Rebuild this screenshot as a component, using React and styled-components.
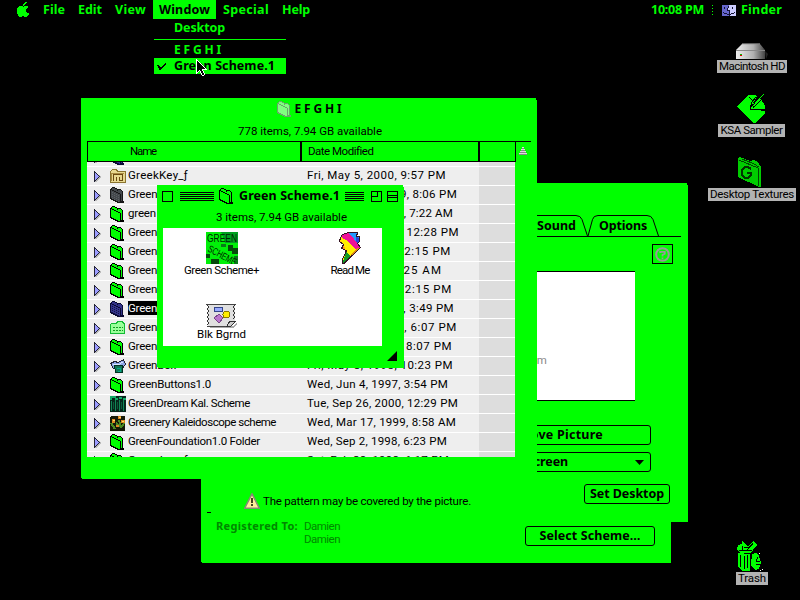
import React, { useLayoutEffect, useRef, useState } from "react";
import styled, { createGlobalStyle, css } from "styled-components";

const GREEN = "#00ff00";
const plain = css`
  font-family: Roboto, "Liberation Sans", sans-serif;
  font-size: 11.5px;
  font-weight: 400;
`;
const strong = css`
  font-family: "Noto Sans", "Open Sans", sans-serif;
  font-size: 12.5px;
  font-weight: 700;
`;

const Global = createGlobalStyle`
  * { box-sizing: border-box; }
  body { margin: 0; background: #000; overflow: hidden; }
  svg { display: block; flex: none; }
`;

/* ---------- text ---------- */

const Line = styled.span`
  display: block;
  flex: none;
  white-space: pre;
  line-height: 14px;
  color: ${(p) => p.$color || "#000"};
  ${(p) => (p.$bold ? strong : plain)}
  ${(p) => p.$size && `font-size: ${p.$size}px;`}
`;

/* A label tracked so that its run of glyphs fills the given width. */
function Label({ width, children, bold, color, size }) {
  const ref = useRef(null);
  const [tracking, setTracking] = useState(0);
  useLayoutEffect(() => {
    const range = document.createRange();
    range.selectNodeContents(ref.current);
    const natural = range.getBoundingClientRect().width;
    setTracking((t) => t + (width - natural) / children.length);
  }, [width, children]);
  return (
    <Line ref={ref} $bold={bold} $color={color} $size={size} style={{ width, letterSpacing: tracking }}>
      {children}
    </Line>
  );
}

/* ---------- drawings ---------- */

function Bitmap({ rows, colors }) {
  const width = Math.max(...rows.map((r) => r.length));
  const cells = [];
  rows.forEach((row, y) => {
    let x = 0;
    while (x < row.length) {
      let end = x + 1;
      while (end < row.length && row[end] === row[x]) end += 1;
      if (colors[row[x]]) {
        cells.push(<rect key={`${x}-${y}`} x={x} y={y} width={end - x} height="1" fill={colors[row[x]]} />);
      }
      x = end;
    }
  });
  return (
    <svg width={width} height={rows.length} shapeRendering="crispEdges">
      {cells}
    </svg>
  );
}

const APPLE = [
  "........##...",
  ".......##....",
  "......##.....",
  "......#......",
  "..####.####..",
  ".##########..",
  "##########...",
  "#########....",
  "#########....",
  "#########....",
  "##########...",
  "############.",
  ".###########.",
  ".##########..",
  "..###..###...",
];

const FINDER = [
  "aaaaaaabbbbbbb",
  "aaaaaakbbbbbbb",
  "aakaaakbbbkbbb",
  "aakaakbbbbkbbb",
  "aaaaakbbbbbbbb",
  "aaaaakkkbbbbbb",
  "aaaaaaakbbbbbb",
  "akaaaaakbbbbkb",
  "aakkkaakbkkkbb",
  "aaaaakkkkbbbbb",
  "aaaaaaakbbbbbb",
];

const ARROW = [
  "w",
  "ww",
  "wkw",
  "wkkw",
  "wkkkw",
  "wkkkkw",
  "wkkkkkw",
  "wkkkkkkw",
  "wkkkkkkkw",
  "wkkkkkkkkw",
  "wkkkkkwwwww",
  "wkkwkkw",
  "wkw.wkkw",
  "ww..wkkw",
  "w....wkkw",
  ".....wkkw",
  "......ww",
];

const CHECK = [
  "........k",
  ".......kk",
  "kk....kk.",
  ".kk..kk..",
  ".kkkkk...",
  "..kkk....",
  "..kk.....",
];

const FOLDER = [
  "..kkk..........",
  ".kgggkk........",
  "kkgggggkkkk....",
  "kgkkgggkgggk...",
  "kgggkkggggggk..",
  "kgdgggkkggggk..",
  "kgggdgggkkggk..",
  "kgdgggdgggkgk..",
  "kgggdgggdgkgk..",
  "kgdgggdgggkgk..",
  "kgggdgggdgkgk..",
  "kkdgggdgggkgk..",
  ".kkkdgggdgkgk..",
  "...kkkdgggkgk..",
  ".....kkkdgkkkk.",
  ".......kkkkkkk.",
];

function Folder({ fill = GREEN, line = "#000", dots = fill }) {
  return <Bitmap rows={FOLDER} colors={{ k: line, g: fill, d: dots }} />;
}

function RowIcon({ kind }) {
  if (kind === "key")
    return (
      <svg width="16" height="16" shapeRendering="crispEdges">
        <path d="M.5 14.500v-11l2-2h4l1 2h8v11z" fill="#e8d890" stroke="#8a7430" />
        <path d="M3.500 13V6.500h9v6h-3V9M6.500 9v4" fill="none" stroke="#6b4a10" />
        <path d="M2 5.500h12M1.500 5v8" stroke="#a88a40" />
      </svg>
    );
  if (kind === "dark") return <Folder fill="#44484c" line="#181818" dots="#5c6064" />;
  if (kind === "navy") return <Folder fill="#333388" line="#0a0a33" dots="#11114a" />;
  if (kind === "pale")
    return (
      <svg width="16" height="16" shapeRendering="crispEdges">
        <path d="M.5 13.500V4.500l1-1h5l1-2h5l1 2h1v10z" fill="#99ff99" stroke="#11bb33" />
        <path d="M3 7.500h10M3 10.500h10" stroke="#119922" strokeDasharray="2 1" />
      </svg>
    );
  if (kind === "cards")
    return (
      <svg width="16" height="16" shapeRendering="crispEdges">
        <path d="M.5 5.500l4-2 4 1 5-3 2 5-2 2v1l-10 1z" fill="#8fa8e8" stroke="#223" />
        <path d="M3 6l5 1 5-3" fill="none" stroke="#dde6ff" strokeWidth="1" />
        <path d="M4.500 7.500h8v7h-7z" fill="#117755" stroke="#032" />
        <path d="M7 10h3v3H8" fill="none" stroke="#00aa88" />
      </svg>
    );
  if (kind === "dream")
    return (
      <svg width="16" height="16" shapeRendering="crispEdges">
        <path d="M0 0h16v16H0z" fill="#06251a" />
        <path d="M0 1h6M0 3h2M5 3h3M9 2h3M13 3h3" stroke="#11aa66" strokeWidth="2" />
        <path d="M1.500 5v10M5.500 4v11M9.500 4v11M13.500 4v11" stroke="#118855" />
        <path d="M3.500 6v7M7.500 6v7M11.500 6v7" stroke="#0a5a3a" />
      </svg>
    );
  if (kind === "flowers")
    return (
      <svg width="16" height="16" shapeRendering="crispEdges">
        <path d="M1 1h14v15H0V3z" fill="#161a08" />
        <path d="M1 8l4 6M9 5l2 8M6 8l4 3M14 8l-3 5" stroke="#4c8a22" strokeWidth="2" />
        <path d="M2 4h3v4H2zM8 1h3v3H8zM11 5h4v3h-4zM6 10h3v2H6z" fill="#dd8a22" />
        <path d="M3 5h2v1H3zM9 2h2v1H9zM12 6h2v1h-2z" fill="#ffdd66" />
      </svg>
    );
  return <Folder />;
}

const DISCLOSURE = [
  "k......",
  "kk.....",
  "kpk....",
  "kppk...",
  "kpppks.",
  "kppppks",
  "kpppkss",
  "kppkss.",
  "kpkss..",
  "kkss...",
  "kss....",
];
const Disclosure = () => (
  <Bitmap rows={DISCLOSURE} colors={{ k: "#222233", p: "#9c9cff", s: "#bbbbbb" }} />
);

const DiskIcon = () => (
  <svg width="32" height="17" viewBox="0 0 32 17">
    <defs>
      <linearGradient id="disk" x1="0" x2="1">
        <stop offset="0" stopColor="#eee" />
        <stop offset="0.6" stopColor="#b0b0b0" />
        <stop offset="1" stopColor="#444" />
      </linearGradient>
    </defs>
    <path d="M29 8l3 3-2 5z" fill="#222" />
    <path d="M0 7L6 1h18l5 6v9H0z" fill="url(#disk)" />
    <path d="M0 7.500h29M6 .8h18" stroke="#888" fill="none" />
    <path d="M4 11h2v1H4z" fill="#00bb00" />
    <path d="M4 12h2v1H4z" fill="#dd0000" />
  </svg>
);

const SamplerIcon = () => (
  <svg width="29" height="30" shapeRendering="crispEdges">
    <path d="M0 12L11 1h7l2 1-6 11 14 4v2L18 29h-2z" fill={GREEN} />
    <path d="M16 9l8-4 4 7v3H18z" fill={GREEN} />
    <path d="M12 3l4 4M19 3l-4 5-2 7M13 15h8l7 2" fill="none" stroke="#000" />
    <path d="M14 13L26 0M17 13L28 2" stroke="#000" />
    <path d="M15 13L27 0" stroke={GREEN} />
  </svg>
);

const TexturesIcon = () => (
  <svg width="28" height="31" shapeRendering="crispEdges">
    <path d="M0 1l2-1 10 4 3-1 4 1 4 6v20H21L0 20z" fill="#00cc00" />
    <path d="M1 3l19 8v18M4 2l10 4 2 1 5 3" fill="none" stroke="#004400" />
    <path d="M13 12l-3-2H7l-3 3v5l3 3h3l3-3v-2H9" fill="none" stroke="#003300" strokeWidth="2" />
  </svg>
);

const TrashIcon = () => (
  <svg width="30" height="31" shapeRendering="crispEdges">
    <path d="M1 4l4-1V0l3 3 3 2 5-5 4 4-4 5-2 3H3L0 8z" fill={GREEN} />
    <path d="M5.500 5v4M7 6.500h5l4-4M10 9l5-5M2 9.500h13" fill="none" stroke="#000" />
    <path d="M1 12l12 1v17H6l-5-4z" fill={GREEN} />
    <path d="M3.500 14v12M7.500 15v13M10.500 14v13" stroke="#000" />
    <path d="M15 13l4-1 3 3 2 6-2 7-4 1-4-5z" fill={GREEN} />
    <path d="M21 16l-2 4 4 1M19 23.500h4" fill="none" stroke="#000" />
    <path d="M22 12h1v1h-1zM25 28h1v1h-1zM23 29h1v1h-1z" fill="#fff" />
  </svg>
);

const SchemeIcon = () => (
  <svg width="32" height="32" shapeRendering="crispEdges">
    <path d="M0 0h32v32H0z" fill="#00f008" />
    <path d="M15 0h17v11H19z" fill="#00a020" />
    <path d="M22 13h5v3h5v6h-6v-3h-4zM0 22h4v4H0zM5 27h8v5H5z" fill="#064a0c" />
    <path d="M28 24h4v8h-4zM15 12h5v3h-5z" fill="#087a18" />
    <g fontFamily="Liberation Sans, sans-serif" fontSize="11" fill="#002200">
      <text x="1" y="10" textLength="30" lengthAdjust="spacingAndGlyphs">GREEN</text>
      <text x="1" y="19" transform="rotate(28 1 19)" fontSize="10" textLength="31" lengthAdjust="spacingAndGlyphs">
        SCHEME
      </text>
    </g>
  </svg>
);

const BOLT = "M3.500 2.500l6-2h9l-1 4h3v5l-2 2 3 4L5.500 31h-2v-4L7.500 18.500l-5-2 2-4-4-3 1-4z";
const BoltIcon = () => (
  <svg width="23" height="32" shapeRendering="crispEdges">
    <defs>
      <clipPath id="bolt">
        <path d={BOLT} />
      </clipPath>
    </defs>
    <g clipPath="url(#bolt)">
      <path d="M0 0h23v33H0z" fill="#ffee00" />
      <path d="M8 0h15v16l-4-1z" fill="#2299ff" />
      <path d="M17 5l6 2v9l-5-2z" fill="#2244dd" />
      <path d="M0 4l9-4 13 15-4 4L9 9z" fill="#ee1199" />
      <path d="M0 8l5 4 1 5H0z" fill="#ff9922" />
      <path d="M12 23l5-6 5-2-9 10z" fill="#dd8811" />
      <path d="M7 20l5 5-9 8z" fill="#119922" />
    </g>
    <path d={BOLT} fill="none" stroke="#331122" />
  </svg>
);

const BackgroundIcon = () => (
  <svg width="32" height="24" shapeRendering="crispEdges">
    <path d="M3 22h24l4-4v3l-4 3H4z" fill="#aaa" />
    <path d="M2 1h27v16l-6 5H2z" fill="#e0e0e0" />
    <path d="M0 .5h30M1 22.500h21" stroke="#444" />
    <path d="M1 1l2 2-2 2 2 2-2 2 2 2-2 2 2 2-2 2 2 2-2 2M29 1l-2 2 2 2-2 2 2 2-2 2 2 2-2 2" fill="none" stroke="#333" />
    <path d="M8.500 3.500h8v4h-8z" fill="#99aaff" stroke="#334488" />
    <circle cx="20.500" cy="10.500" r="3.500" fill="#ffee00" stroke="#887700" />
    <path d="M13 10l4 4-4 5-5-5z" fill="#bb77cc" stroke="#774488" />
    <path d="M21 22l3-5h6l-5 5z" fill="#ccc" stroke="#333" />
  </svg>
);

const WarningIcon = () => (
  <svg width="16" height="16">
    <path d="M8 .8L15.300 15.200H.7z" fill="#ffee99" stroke="#888877" strokeWidth="1.500" />
    <path d="M7 5h2v5H7zM7 11h2v2H7z" fill="#444422" />
  </svg>
);

const HelpIcon = () => (
  <svg width="15" height="15" fill="none" stroke="#999999" strokeWidth="2">
    <circle cx="7.500" cy="7.500" r="6.300" />
    <path d="M5.200 6V4.800h4.600v2L7.500 8v1.500M7.500 10.500v1.700" strokeWidth="1.700" />
  </svg>
);

const TabEdge = ({ rising }) => (
  <svg width={rising ? 10 : 12} height="21" fill="none" stroke="#000">
    <path d={rising ? "M0 21L4.500 4.500Q5.500.5 10 .5" : "M0 .5Q4.500.5 6 4.500L11.500 21"} />
  </svg>
);

/* ---------- menu bar ---------- */

const Screen = styled.main`
  position: relative;
  width: 800px;
  height: 600px;
  overflow: hidden;
  background: #000;
`;
const MenuBar = styled.header`
  display: flex;
  align-items: center;
  height: 19px;
  padding: 0 18px 0 17px;
`;
const MenuTitle = styled.div`
  display: flex;
  align-items: center;
  height: 19px;
  padding: 1px 6px 0;
  background: ${(p) => (p.$open ? GREEN : "transparent")};
`;
const Menus = styled.nav`
  display: flex;
  flex: 1;
  gap: 1px;
  margin-left: 7px;
`;
const Status = styled.div`
  display: flex;
  align-items: center;
  gap: 5px;
  padding-top: 1px;
`;
const Dots = styled.i`
  width: 1px;
  height: 11px;
  margin: 0 4px 0 3px;
  background: repeating-linear-gradient(${GREEN} 0 1px, transparent 1px 3px);
`;
const Menu = styled.div`
  position: absolute;
  z-index: 5;
  left: 154px;
  top: 20px;
  width: 132px;
  display: flex;
  flex-direction: column;
`;
const MenuItem = styled.div`
  display: flex;
  align-items: center;
  height: 16px;
  padding-left: ${(p) => (p.$checked ? 3 : 20)}px;
  gap: 8px;
  background: ${(p) => (p.$checked ? GREEN : "transparent")};
`;
const Separator = styled.hr`
  width: 100%;
  height: 1px;
  margin: 3px 0 2px;
  border: 0;
  background: ${GREEN};
`;
const Pointer = styled.div`
  position: absolute;
  z-index: 6;
  left: 196px;
  top: 59px;
`;

/* ---------- windows ---------- */

const Window = styled.section`
  position: absolute;
  left: ${(p) => p.$x}px;
  top: ${(p) => p.$y}px;
  width: ${(p) => p.$w}px;
  height: ${(p) => p.$h}px;
  display: flex;
  flex-direction: column;
  background: ${GREEN};
  clip-path: polygon(0 0, calc(100% - 1px) 0, calc(100% - 1px) 2px, 100% 2px, 100% 100%, 1px 100%, 1px calc(100% - 1px), 0 calc(100% - 1px));
`;
const TitleRow = styled.div`
  display: flex;
  align-items: center;
  justify-content: ${(p) => (p.$center ? "center" : "flex-start")};
  flex: none;
  gap: ${(p) => p.$gap || 3}px;
  height: 22px;
  padding: ${(p) => p.$pad || "0"};
`;
const TitleGroup = styled.div`
  display: flex;
  align-items: center;
  flex: 1;
  gap: 5px;
  padding-left: 1px;
`;
const InfoRow = styled.div`
  display: flex;
  flex: none;
  align-items: center;
  height: 21px;
  padding: 0 0 ${(p) => p.$lift || 0}px ${(p) => p.$indent}px;
`;
const Headings = styled.div`
  display: flex;
  flex: none;
  height: 21px;
  margin: 0 6px;
  border: solid #000;
  border-width: 1px 0 0 1px;
`;
const Heading = styled.div`
  display: flex;
  align-items: center;
  width: ${(p) => p.$w}px;
  padding: 0 0 2px ${(p) => p.$pad || 0}px;
  border: solid #000;
  border-width: 0 ${(p) => p.$edge || 2}px 1px 0;
`;
const ScrollUp = styled.div`
  padding: 5px 0 0 3px;
`;
const List = styled.div`
  flex: none;
  width: 428px;
  height: 295px;
  margin-left: 6px;
  overflow: hidden;
`;
const Row = styled.div`
  display: grid;
  grid-template-columns: 7px 16px 16px 2px 179px 172px 36px;
  align-items: center;
  height: 19px;
  border-bottom: 1px solid #fff;
  background: #eee;
  &:first-child {
    margin-top: -14px;
  }
`;
const Cell = styled.div`
  grid-column: ${(p) => p.$col};
  min-width: 0;
`;
const TextCell = styled.div`
  grid-column: ${(p) => p.$col};
  justify-self: start;
  margin-bottom: 2px;
  background: ${(p) => (p.$selected ? "#000" : "transparent")};
`;
const SortShade = styled.div`
  grid-column: 7;
  height: 18px;
  background: #ddd;
`;

const WindowBox = styled.i`
  display: block;
  flex: none;
  width: 11px;
  height: 11px;
  border: 1px solid #000;
`;
const Stripes = styled.i`
  flex: none;
  width: ${(p) => p.$w}px;
  height: 9px;
  background: repeating-linear-gradient(#000 0 1px, transparent 1px 2px);
`;
const IconPane = styled.div`
  display: grid;
  grid-template-columns: 117px 102px;
  grid-template-rows: 72px 46px;
  width: 219px;
  height: 118px;
  margin-left: 6px;
  background: #fff;
`;
const FileItem = styled.div`
  display: flex;
  flex-direction: column;
  align-items: center;
  padding: 4px 0 0 ${(p) => p.$shift || 0}px;
  & > span {
    margin-top: -1px;
  }
`;
const Grow = styled.div`
  align-self: flex-end;
  padding: 5px 7px 0 0;
`;

/* ---------- control panels ---------- */

const TabStrip = styled.div`
  display: flex;
  justify-content: flex-end;
  height: 22px;
  margin: 32px 7px 0 0;
  padding-right: 22px;
  border-bottom: 1px solid #000;
`;
const Tab = styled.div`
  display: flex;
`;
const TabFace = styled.div`
  padding: 3px 0 0 1px;
  border-top: 1px solid #000;
`;
const HelpButton = styled.div`
  display: flex;
  align-items: center;
  justify-content: center;
  align-self: flex-end;
  width: 21px;
  height: 20px;
  margin: 7px 15px 0 0;
  border: 1px solid #000;
`;
const Preview = styled.div`
  align-self: flex-end;
  width: 150px;
  height: 130px;
  margin: 7px 53px 0 0;
  padding: 81px 0 0 19px;
  border: solid #000;
  border-width: 1px 0;
  background: #fff;
`;
const Button = styled.div`
  display: flex;
  align-items: center;
  flex: none;
  justify-content: ${(p) => (p.$spread ? "space-between" : "center")};
  align-self: flex-end;
  width: ${(p) => p.$w}px;
  height: 20px;
  margin: ${(p) => p.$margin || "0"};
  padding: ${(p) => p.$pad || "0"};
  border: 1px solid #000;
  border-radius: 3px;
`;
const Footer = styled.div`
  display: flex;
  justify-content: space-between;
  height: 26px;
  margin-top: 12px;
  padding: 0 18px 0 43px;
  ${Button} {
    align-self: flex-start;
  }
`;
const Warning = styled.div`
  display: flex;
  align-items: center;
  gap: 3px;
  padding-top: 8px;
`;
const Dash = styled.i`
  width: 4px;
  height: 1px;
  margin: 2px 0 0 6px;
  background: #000;
`;
const Registration = styled.div`
  display: flex;
  align-items: flex-start;
  padding: 20px 0 0 15px;
  & > span {
    margin-top: -1px;
  }
`;
const Owners = styled.div`
  display: flex;
  flex: 1;
  flex-direction: column;
  padding-left: 6px;
  & > span {
    line-height: 13px;
  }
`;

/* ---------- desktop icons ---------- */

const DesktopItem = styled.div`
  position: absolute;
  left: ${(p) => p.$x}px;
  top: ${(p) => p.$y}px;
  width: ${(p) => p.$w}px;
  height: ${(p) => p.$h}px;
  display: flex;
  flex-direction: column;
  align-items: center;
  justify-content: space-between;
`;
const Caption = styled.div`
  display: flex;
  justify-content: center;
  width: 100%;
  height: 13px;
  background: #b3b3b3;
  & > span {
    line-height: 13px;
  }
`;

const MENUS = [
  ["File", 22],
  ["Edit", 24],
  ["View", 31],
  ["Window", 51],
  ["Special", 46],
  ["Help", 28],
];

const ROWS = [
  ["Greek", 28, "Fri, May 5, 2000, 9:52 PM", 138, "navy"],
  ["GreekKey_ƒ", 60, "Fri, May 5, 2000, 9:57 PM", 139, "key"],
  ["GreenApple", 58, "Mon, Sep 13, 1999, 8:06 PM", 150, "dark"],
  ["green", 28, "Mon, Jan 12, 1998, 7:22 AM", 146],
  ["Green 1", 38, "Wed, Apr 1, 1998, 12:28 PM", 152],
  ["Green 2", 38, "Sun, Jul 5, 1998, 2:15 PM", 144],
  ["Green 3", 38, "Fri, Oct 1, 99, 8:25 AM", 135],
  ["Green 4", 38, "Sun, Jul 5, 1998, 2:15 PM", 145],
  ["Green 5", 38, "Mon, Jul 12, 1999, 3:49 PM", 147, "navy", true],
  ["Green 6", 38, "Wed, Dec 2, 1998, 6:07 PM", 150, "pale"],
  ["Green 7", 38, "Tue, Mar 3, 1998, 8:07 PM", 145],
  ["GreenBox", 48, "Fri, May 8, 1998, 10:23 PM", 146, "cards"],
  ["GreenButtons1.0", 83, "Wed, Jun 4, 1997, 3:54 PM", 141],
  ["GreenDream Kal. Scheme", 122, "Tue, Sep 26, 2000, 12:29 PM", 151, "dream"],
  ["Greenery Kaleidoscope scheme", 148, "Wed, Mar 17, 1999, 8:58 AM", 149, "flowers"],
  ["GreenFoundation1.0 Folder", 132, "Wed, Sep 2, 1998, 6:23 PM", 140],
  ["GreenIron ƒ", 60, "Sat, Feb 28, 1998, 6:17 PM", 142],
];

export default function App() {
  return (
    <Screen>
      <Global />
      <MenuBar>
        <Bitmap rows={APPLE} colors={{ "#": GREEN }} />
        <Menus>
          {MENUS.map(([name, w]) => (
            <MenuTitle key={name} $open={name === "Window"}>
              <Label width={w} bold color={name === "Window" ? "#000" : GREEN}>
                {name}
              </Label>
            </MenuTitle>
          ))}
        </Menus>
        <Status>
          <Label width={53} bold color={GREEN}>10:08 PM</Label>
          <Dots />
          <Bitmap rows={FINDER} colors={{ a: "#6666cc", b: "#ccccff", k: "#111133" }} />
          <Label width={41} bold color={GREEN}>Finder</Label>
        </Status>
      </MenuBar>

      <Menu>
        <MenuItem><Label width={51} bold color={GREEN}>Desktop</Label></MenuItem>
        <Separator />
        <MenuItem><Label width={47} bold color={GREEN} size={12}>E F G H I</Label></MenuItem>
        <MenuItem $checked>
          <Bitmap rows={CHECK} colors={{ k: "#000" }} />
          <Label width={101} bold>Green Scheme.1</Label>
        </MenuItem>
      </Menu>
      <Pointer><Bitmap rows={ARROW} colors={{ w: "#fff", k: "#000" }} /></Pointer>

      <DesktopItem $x={717} $y={43} $w={70} $h={30}>
        <DiskIcon />
        <Caption><Label width={66}>Macintosh HD</Label></Caption>
      </DesktopItem>
      <DesktopItem $x={718} $y={94} $w={67} $h={43}>
        <SamplerIcon />
        <Caption><Label width={62}>KSA Sampler</Label></Caption>
      </DesktopItem>
      <DesktopItem $x={708} $y={157} $w={88} $h={44}>
        <TexturesIcon />
        <Caption><Label width={84}>Desktop Textures</Label></Caption>
      </DesktopItem>
      <DesktopItem $x={736} $y={541} $w={32} $h={44}>
        <TrashIcon />
        <Caption><Label width={28}>Trash</Label></Caption>
      </DesktopItem>

      <Window $x={201} $y={500} $w={470} $h={63}>
        <Registration>
          <Label width={82} bold color="#008800" size={11}>Registered To:</Label>
          <Owners>
            <Label width={36} color="#008800">Damien</Label>
            <Label width={36} color="#008800">Damien</Label>
          </Owners>
          <Button $w={130} $margin="0 16px 0 0">
            <Label width={101} bold>Select Scheme…</Label>
          </Button>
        </Registration>
      </Window>

      <Window $x={201} $y={183} $w={487} $h={339}>
        <TabStrip>
          <Tab>
            <TabFace><Label width={39} bold>Sound</Label></TabFace>
            <TabEdge />
          </Tab>
          <Tab>
            <TabEdge rising />
            <TabFace><Label width={48} bold>Options</Label></TabFace>
            <TabEdge />
          </Tab>
        </TabStrip>
        <HelpButton><HelpIcon /></HelpButton>
        <Preview><Label width={43} color="#888">Medium</Label></Preview>
        <Button $w={188} $margin="24px 37px 0 0" $pad="0 9px 0 0">
          <Label width={101} bold>Remove Picture</Label>
        </Button>
        <Button $w={188} $margin="7px 37px 0 0" $pad="0 6px 0 28px" $spread>
          <Label width={76} bold>Fit to Screen</Label>
          <svg width="9" height="5"><path d="M0 0h9L4.500 5z" /></svg>
        </Button>
        <Footer>
          <Warning>
            <WarningIcon />
            <Label width={208}>The pattern may be covered by the picture.</Label>
          </Warning>
          <Button $w={86}><Label width={74} bold>Set Desktop</Label></Button>
        </Footer>
        <Dash />
      </Window>

      <Window $x={81} $y={98} $w={456} $h={381}>
        <TitleRow $center>
          <Folder fill="#80ff80" line="#6aa56a" />
          <Label width={47} bold size={12}>E F G H I</Label>
        </TitleRow>
        <InfoRow $indent={157}><Label width={144}>778 items, 7.94 GB available</Label></InfoRow>
        <Headings>
          <Heading $w={214} $pad={42}><Label width={26}>Name</Label></Heading>
          <Heading $w={178} $pad={6}><Label width={65}>Date Modified</Label></Heading>
          <Heading $w={36} $edge={1} />
          <ScrollUp>
            <svg width="8" height="8" shapeRendering="crispEdges">
              <path d="M3 0h2v2H3zM2 2h4v2H2zM1 4h6v2H1zM0 6h8v2H0z" fill="#ddd" />
              <path d="M3 1.500h2M2 3.500h4M1 5.500h6M0 7.500h8" stroke="#888" />
            </svg>
          </ScrollUp>
        </Headings>
        <List>
          {ROWS.map(([name, w, date, dw, kind, selected], i) => (
            <Row key={i}>
              <Cell $col={2}><Disclosure /></Cell>
              <Cell $col={3}><RowIcon kind={kind} /></Cell>
              <TextCell $col={5} $selected={selected}>
                <Label width={w} color={selected ? "#fff" : "#000"}>{name}</Label>
              </TextCell>
              <TextCell $col={6}><Label width={dw}>{date}</Label></TextCell>
              <SortShade />
            </Row>
          ))}
        </List>
      </Window>

      <Window $x={157} $y={185} $w={247} $h={183}>
        <TitleRow $pad="0 6px 0 5px" $gap={6}>
          <WindowBox />
          <TitleGroup>
            <Stripes $w={34} />
            <Folder />
            <Label width={101} bold>Green Scheme.1</Label>
            <Stripes $w={19} />
          </TitleGroup>
          <svg width="27" height="11" fill="none" stroke="#000" shapeRendering="crispEdges">
            <path d="M.5.5h10v10H.5zM6.500.5v5H.5M16.500.5h10v10h-10zM16.500 4.500h10M16.500 6.500h10" />
          </svg>
        </TitleRow>
        <InfoRow $indent={59} $lift={1}><Label width={131}>3 items, 7.94 GB available</Label></InfoRow>
        <IconPane>
          <FileItem>
            <SchemeIcon />
            <Label width={75}>Green Scheme+</Label>
          </FileItem>
          <FileItem $shift={38}>
            <BoltIcon />
            <Label width={39}>Read Me</Label>
          </FileItem>
          <FileItem>
            <BackgroundIcon />
            <Label width={49}>Blk Bgrnd</Label>
          </FileItem>
        </IconPane>
        <Grow>
          <svg width="10" height="10"><path d="M10 0v10H0z" /></svg>
        </Grow>
      </Window>
    </Screen>
  );
}
